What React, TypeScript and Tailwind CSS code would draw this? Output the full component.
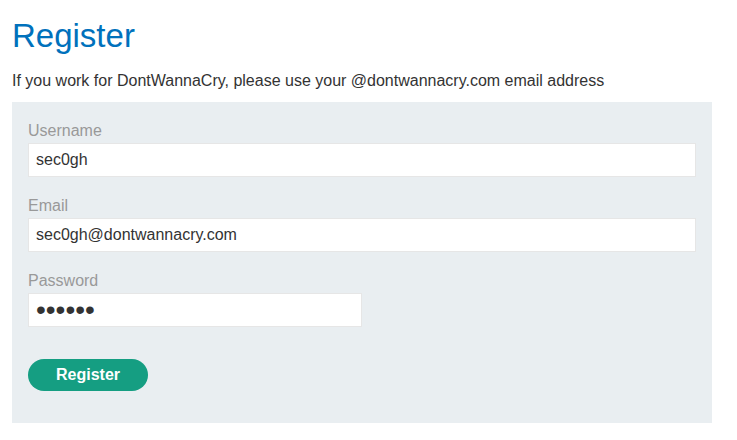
import React from 'react';

const Field: React.FC<{ label: string; value: string; type?: string; narrow?: boolean }> = ({
  label,
  value,
  type = 'text',
  narrow,
}) => (
  <div className="mb-[19px]">
    <label className="block text-[16px] leading-[20px] text-[#999999] mb-[2px]">{label}</label>
    <input
      type={type}
      defaultValue={value}
      className={`block h-[34px] bg-white border border-[#e6e6e6] px-[7px] text-[#333333] outline-none ${
        narrow ? 'w-[334px] text-[28px]' : 'w-[668px] text-[16px]'
      }`}
    />
  </div>
);

export default function App() {
  return (
    <div className="bg-white min-h-[440px] px-[12px] pt-[14px]" style={{ fontFamily: '"Liberation Sans", Arial, sans-serif' }}>
      <h1 className="text-[33px] leading-[44px] text-[#0071bc]">Register</h1>
      <p className="mt-[12px] text-[16px] leading-[22px] text-[#333333]">
        If you work for DontWannaCry, please use your @dontwannacry.com email address
      </p>
      <div className="mt-[10px] w-[700px] bg-[#e9eef1] px-[16px] pt-[19px] pb-[32px]">
        <Field label="Username" value="sec0gh" />
        <Field label="Email" value="sec0gh@dontwannacry.com" />
        <Field label="Password" value="wiener" type="password" narrow />
        <button className="mt-[13px] h-[32px] w-[120px] rounded-full bg-[#159e82] text-white font-bold text-[16px]">
          Register
        </button>
      </div>
    </div>
  );
}
